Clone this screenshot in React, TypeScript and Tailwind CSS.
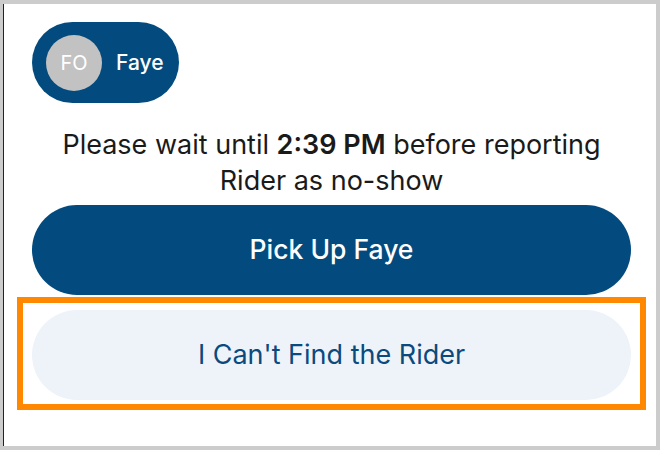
import React from 'react';

export default function App() {
  return (
    <div className="w-[660px] h-[450px] bg-[#cccccc] pt-[4px] pr-[4px] pb-[4px] pl-[3px]" style={{ fontFamily: 'Inter, "Noto Sans", sans-serif' }}>
      <div className="h-full bg-white border-l border-[#222222] pl-[28px] pr-[25px] pt-[18px] flex flex-col">
        <div className="self-start h-[81px] rounded-full bg-[#034b7f] flex items-center pl-[14px] pr-[15px] gap-[14px]">
          <div className="w-[56px] h-[56px] rounded-full bg-[#c2c2c2] flex items-center justify-center text-white text-[20px]">
            FO
          </div>
          <span className="text-white text-[21px] font-medium">Faye</span>
        </div>

        <p className="mt-[24px] text-center text-[27px] leading-[36px] text-[#1a1a1a]">
          Please wait until <span className="font-semibold">2:39 PM</span> before reporting
          <br />
          Rider as no-show
        </p>

        <button className="mt-[6px] h-[90px] rounded-[45px] bg-[#034b7f] text-white text-[26.5px] font-medium">
          Pick Up Faye
        </button>

        <div className="relative mt-[15px]">
          <button className="w-full h-[90px] rounded-[45px] bg-[#eef3fa] text-[#0b4a7e] text-[27px]">
            I Can't Find the Rider
          </button>
          <div className="absolute -left-[15px] -right-[15px] -top-[13px] -bottom-[10px] border-[6px] border-[#ff8800] pointer-events-none" />
        </div>
      </div>
    </div>
  );
}
